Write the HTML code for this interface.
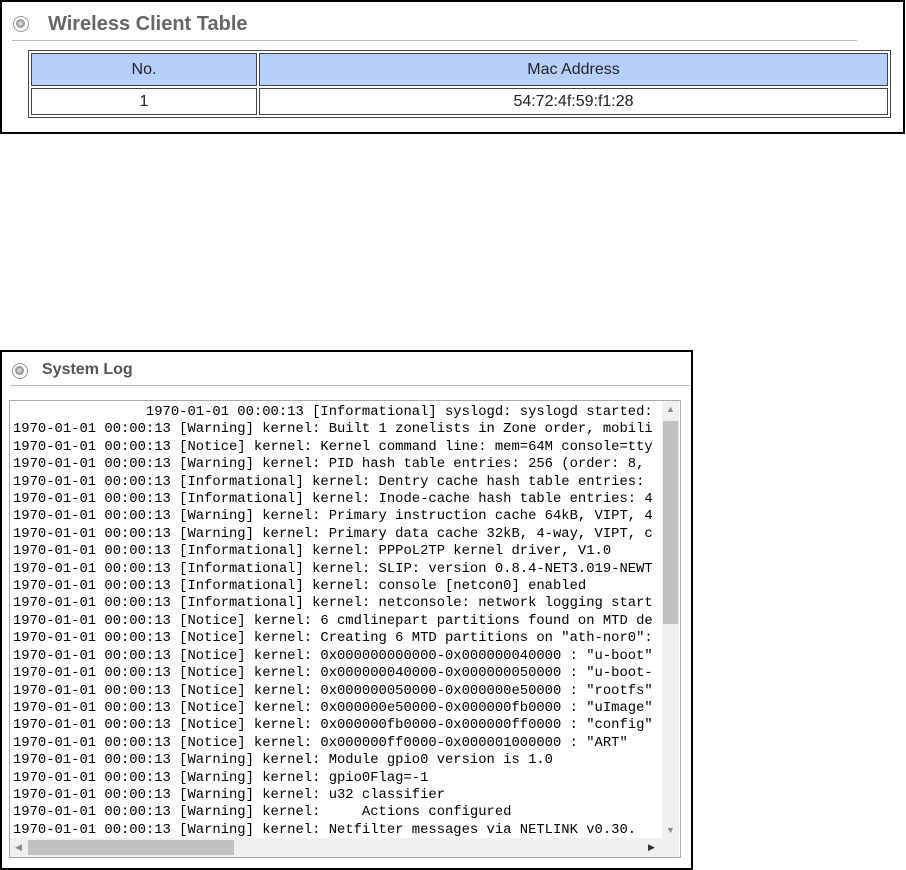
<!DOCTYPE html>
<html><head><meta charset="utf-8"><style>
*{margin:0;padding:0;box-sizing:border-box}
body{width:906px;height:870px;background:#fff;position:relative;overflow:hidden;font-family:"Liberation Sans",Arial,sans-serif}
.box{position:absolute;border:2px solid #000;background:#fff}
.icon{position:absolute;width:16px;height:16px;border:1.5px solid #999;border-radius:50%}
.icon:after{content:"";position:absolute;left:2px;top:2px;width:9px;height:9px;border-radius:50%;border:2px solid #999;box-sizing:border-box;background:#ccc}
.title{position:absolute;color:#666;font-weight:bold}
.rule{position:absolute;height:1px;background:#bbb}
table{position:absolute;border-collapse:separate;border-spacing:2px;border:1px solid #444;font-size:16px;color:#222}
td{border:1px solid #444;text-align:center}
.log{position:absolute;left:9px;top:400px;width:672px;height:458px;border:1px solid #aaa;overflow:hidden}
pre{position:absolute;left:3px;top:3px;font-family:"Liberation Mono",monospace;font-size:13.85px;line-height:17.4px;color:#000;white-space:pre;width:652px;overflow:hidden}
.vs{position:absolute;left:652px;top:0;width:17px;height:437px;background:#f0f0f0}
.vth{position:absolute;left:1px;top:20px;width:15px;height:203px;background:#c1c1c1}
.hs{position:absolute;left:0;top:437px;width:652px;height:19px;background:#f0f0f0}
.hth{position:absolute;left:18px;top:2px;width:206px;height:15px;background:#c1c1c1}
.corner{position:absolute;left:652px;top:437px;width:17px;height:19px;background:#f0f0f0}
.ar{position:absolute;color:#888;font-size:9px}
</style></head><body>
<div class="box" style="left:0;top:0;width:905px;height:134px">
 <div class="icon" style="left:11px;top:14px"></div>
 <div class="title" style="left:46px;top:11px;font-size:20px">Wireless Client Table</div>
 <div class="rule" style="left:10px;top:38px;width:845px"></div>
 <table style="left:26px;top:48px;width:863px">
  <tr style="background:#b7d0fb;height:33px"><td style="width:226px">No.</td><td>Mac Address</td></tr>
  <tr style="height:27px"><td>1</td><td>54:72:4f:59:f1:28</td></tr>
 </table>
</div>
<div class="box" style="left:0;top:350px;width:693px;height:520px">
 <div class="icon" style="left:10px;top:11px"></div>
 <div class="title" style="left:40px;top:9px;font-size:16px;color:#555">System Log</div>
 <div class="rule" style="left:8px;top:33px;width:680px"></div>
</div>
<div class="log">
<pre>                1970-01-01 00:00:13 [Informational] syslogd: syslogd started: 
1970-01-01 00:00:13 [Warning] kernel: Built 1 zonelists in Zone order, mobili
1970-01-01 00:00:13 [Notice] kernel: Kernel command line: mem=64M console=tty
1970-01-01 00:00:13 [Warning] kernel: PID hash table entries: 256 (order: 8, 
1970-01-01 00:00:13 [Informational] kernel: Dentry cache hash table entries: 
1970-01-01 00:00:13 [Informational] kernel: Inode-cache hash table entries: 4
1970-01-01 00:00:13 [Warning] kernel: Primary instruction cache 64kB, VIPT, 4
1970-01-01 00:00:13 [Warning] kernel: Primary data cache 32kB, 4-way, VIPT, c
1970-01-01 00:00:13 [Informational] kernel: PPPoL2TP kernel driver, V1.0
1970-01-01 00:00:13 [Informational] kernel: SLIP: version 0.8.4-NET3.019-NEWT
1970-01-01 00:00:13 [Informational] kernel: console [netcon0] enabled
1970-01-01 00:00:13 [Informational] kernel: netconsole: network logging start
1970-01-01 00:00:13 [Notice] kernel: 6 cmdlinepart partitions found on MTD de
1970-01-01 00:00:13 [Notice] kernel: Creating 6 MTD partitions on "ath-nor0":
1970-01-01 00:00:13 [Notice] kernel: 0x000000000000-0x000000040000 : "u-boot"
1970-01-01 00:00:13 [Notice] kernel: 0x000000040000-0x000000050000 : "u-boot-
1970-01-01 00:00:13 [Notice] kernel: 0x000000050000-0x000000e50000 : "rootfs"
1970-01-01 00:00:13 [Notice] kernel: 0x000000e50000-0x000000fb0000 : "uImage"
1970-01-01 00:00:13 [Notice] kernel: 0x000000fb0000-0x000000ff0000 : "config"
1970-01-01 00:00:13 [Notice] kernel: 0x000000ff0000-0x000001000000 : "ART"
1970-01-01 00:00:13 [Warning] kernel: Module gpio0 version is 1.0
1970-01-01 00:00:13 [Warning] kernel: gpio0Flag=-1
1970-01-01 00:00:13 [Warning] kernel: u32 classifier
1970-01-01 00:00:13 [Warning] kernel:     Actions configured
1970-01-01 00:00:13 [Warning] kernel: Netfilter messages via NETLINK v0.30.</pre>
 <div class="vs"><div class="vth"></div><div class="ar" style="left:4px;top:3px">▲</div><div class="ar" style="left:4px;top:424px">▼</div></div>
 <div class="hs"><div class="hth"></div><div class="ar" style="left:5px;top:4px">◀</div><div class="ar" style="left:638px;top:4px;color:#333">▶</div></div>
 <div class="corner"></div>
</div>
</body></html>
